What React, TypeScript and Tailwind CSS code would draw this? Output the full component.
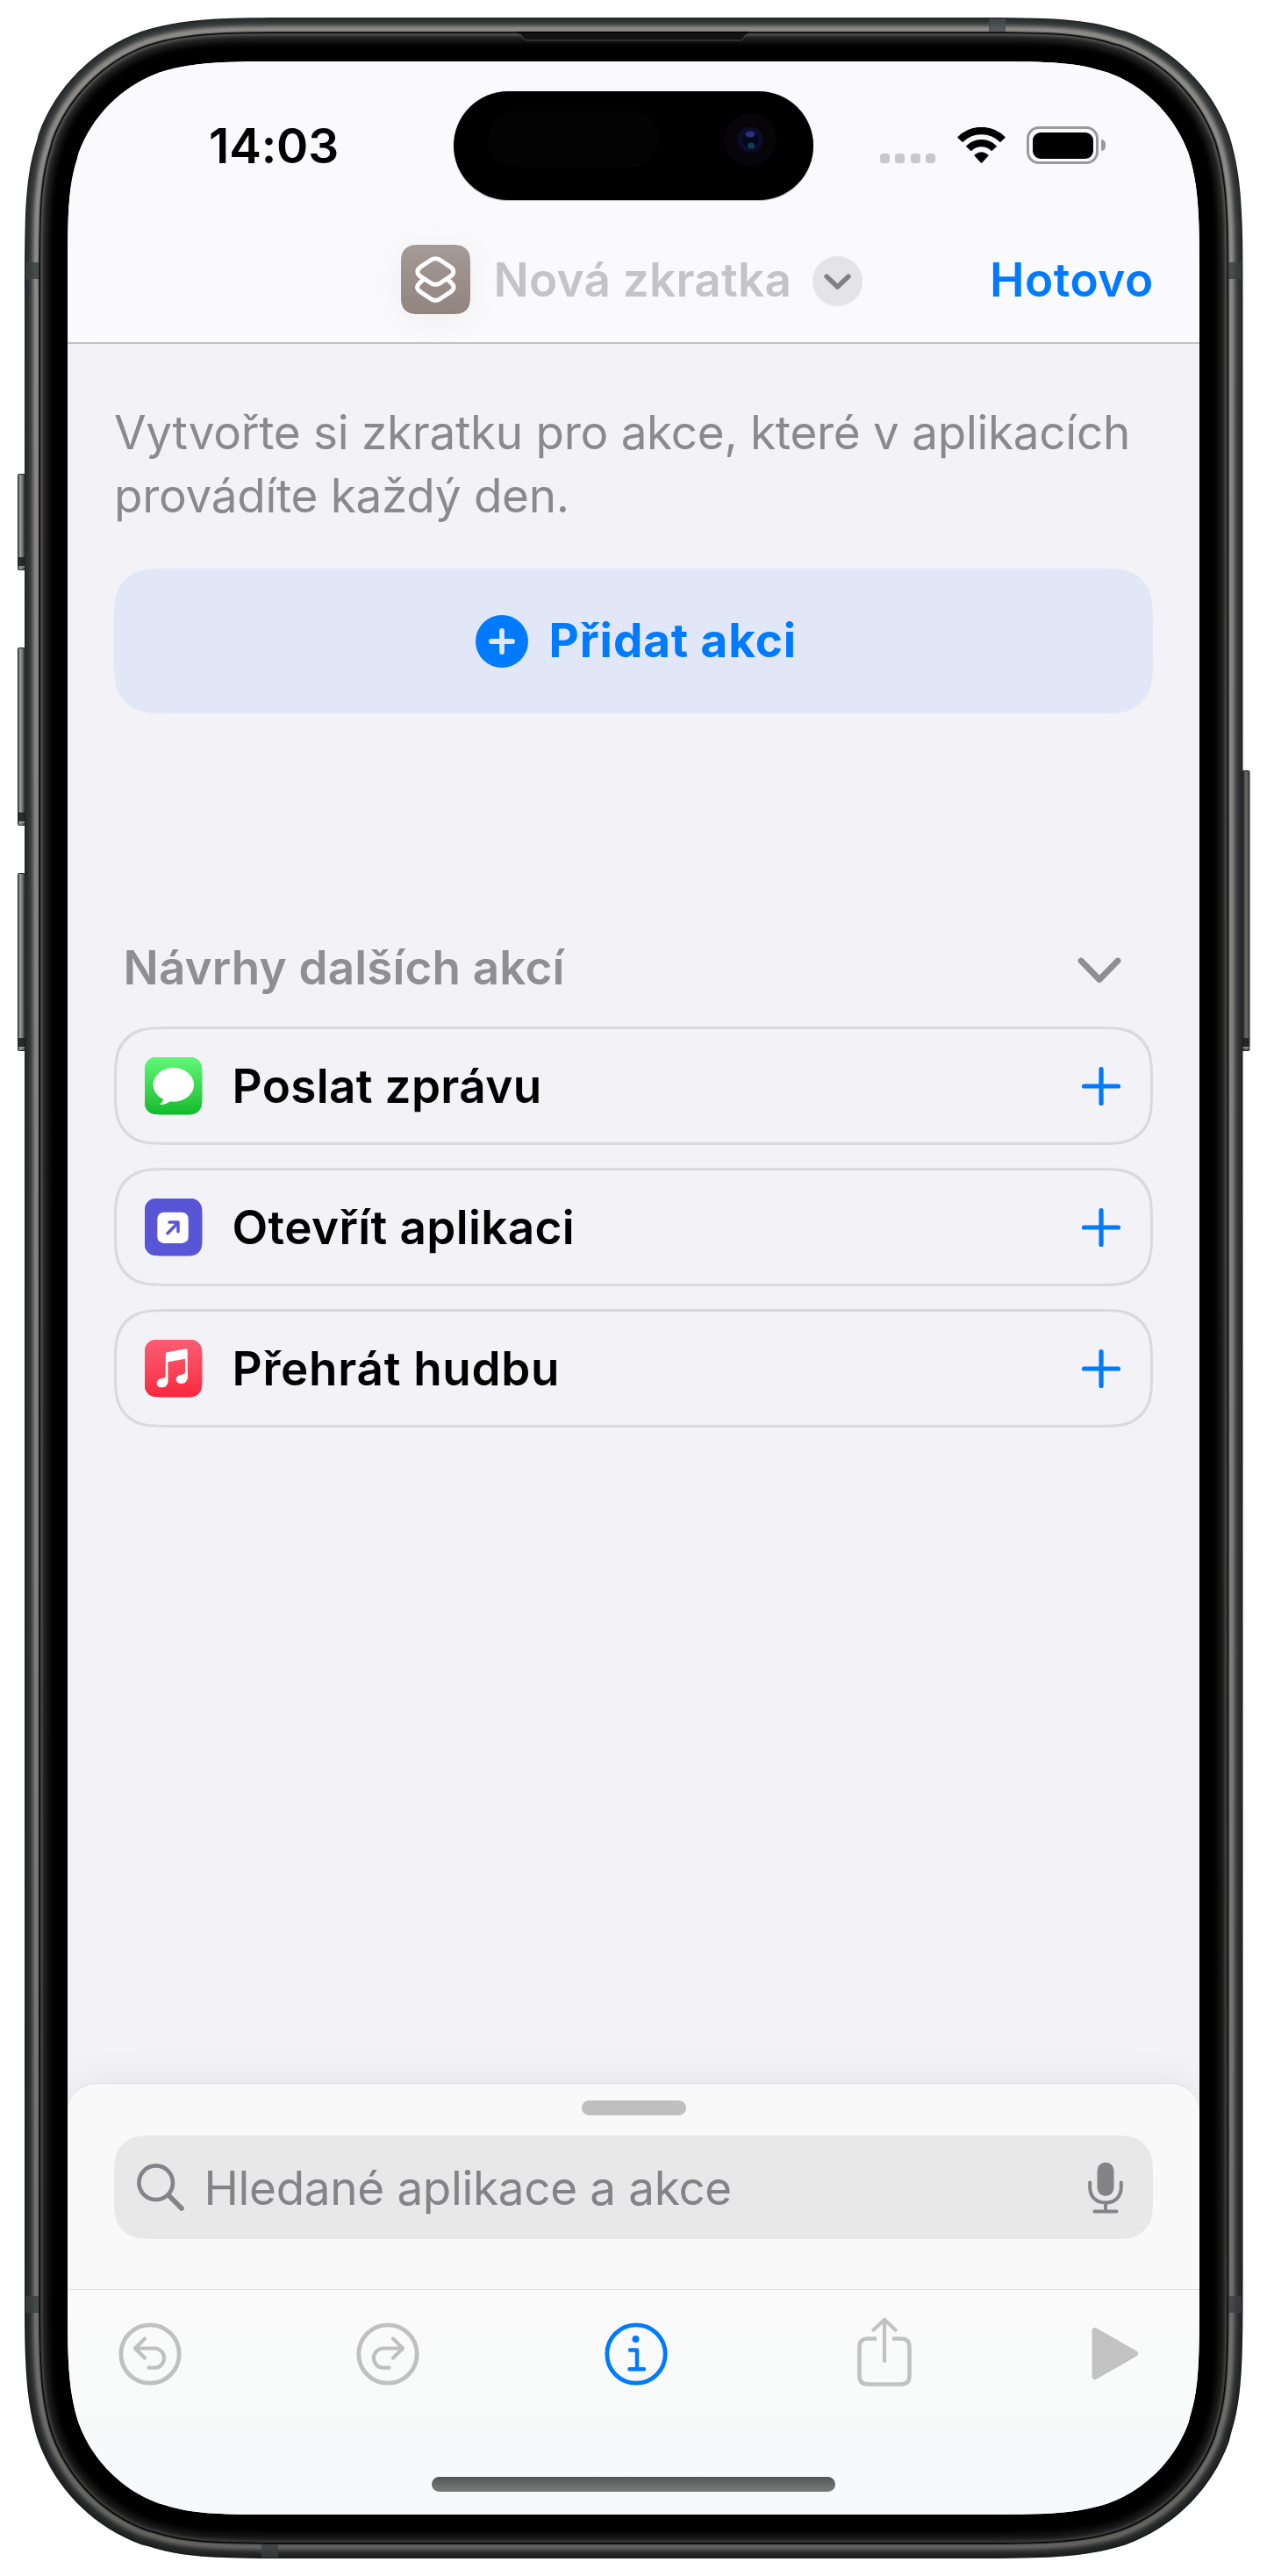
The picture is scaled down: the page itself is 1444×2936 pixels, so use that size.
import type { ReactNode } from "react";

/** Path of a rectangle with continuous ("squircle") corners. */
function squircle(x: number, y: number, w: number, h: number, radius: number): string {
  const r = Math.min(radius, Math.min(w, h) / 2 / 1.52866483);
  const p = (sx: number, sy: number, a: number, b: number) => {
    const px = sx > 0 ? x + a * r : x + w - a * r;
    const py = sy > 0 ? y + b * r : y + h - b * r;
    return `${px.toFixed(2)} ${py.toFixed(2)}`;
  };
  const A = 1.52866483, B = 1.08849296, C = 0.86840694, D = 0.66993427, E = 0.065496;
  const F = 0.63149399, G = 0.07491139, H = 0.37282383, I = 0.16905956;
  return [
    `M${p(1, 1, A, 0)} L${p(-1, 1, A, 0)}`,
    `C${p(-1, 1, B, 0)} ${p(-1, 1, C, 0)} ${p(-1, 1, D, E)} L${p(-1, 1, F, G)}`,
    `C${p(-1, 1, H, I)} ${p(-1, 1, I, H)} ${p(-1, 1, G, F)}`,
    `C${p(-1, 1, 0, C)} ${p(-1, 1, 0, B)} ${p(-1, 1, 0, A)} L${p(-1, -1, 0, A)}`,
    `C${p(-1, -1, 0, B)} ${p(-1, -1, 0, C)} ${p(-1, -1, E, D)} L${p(-1, -1, G, F)}`,
    `C${p(-1, -1, I, H)} ${p(-1, -1, H, I)} ${p(-1, -1, F, G)}`,
    `C${p(-1, -1, C, 0)} ${p(-1, -1, B, 0)} ${p(-1, -1, A, 0)} L${p(1, -1, A, 0)}`,
    `C${p(1, -1, B, 0)} ${p(1, -1, C, 0)} ${p(1, -1, D, E)} L${p(1, -1, F, G)}`,
    `C${p(1, -1, H, I)} ${p(1, -1, I, H)} ${p(1, -1, G, F)}`,
    `C${p(1, -1, 0, C)} ${p(1, -1, 0, B)} ${p(1, -1, 0, A)} L${p(1, 1, 0, A)}`,
    `C${p(1, 1, 0, B)} ${p(1, 1, 0, C)} ${p(1, 1, E, D)} L${p(1, 1, G, F)}`,
    `C${p(1, 1, I, H)} ${p(1, 1, H, I)} ${p(1, 1, F, G)}`,
    `C${p(1, 1, C, 0)} ${p(1, 1, B, 0)} ${p(1, 1, A, 0)} Z`,
  ].join(" ");
}

const clip = (w: number, h: number, r: number) => ({ clipPath: `path("${squircle(0, 0, w, h, r)}")` });

const RINGS: [number, string][] = [
  [0, "#1f2222"], [1, "#2b2e2f"], [3, "#303334"], [5, "#393c3d"], [7, "#474a4a"], [8, "#555655"],
  [9, "#63635f"], [10, "#747370"], [11, "#82817d"], [12, "#8b8a86"], [15, "#7c7b78"], [16, "#2a2b2b"],
  [17, "#050505"], [18, "#4a4a4a"], [20, "#3c3c3c"], [21, "#303030"], [22, "#272727"], [23, "#1f1f1f"],
  [25, "#171717"], [27, "#0f0f0f"], [29, "#080808"], [31, "#030303"], [33, "#000000"],
];

function SideButton({ x, y, h, flip }: { x: number; y: number; h: number; flip?: boolean }) {
  return (
    <g>
      <rect x={x} y={y} width="9" height={h} rx="2" fill="#222524" />
      <rect x={x + 1} y={y + 1} width="7" height={h - 2} fill={flip ? "url(#btnR)" : "url(#btnL)"} />
      <rect x={x + 1} y={y + h - 15} width="7" height="10" fill="#1c1d1c" opacity="0.85" />
      <rect x={x + 1} y={y + h - 5} width="7" height="2" fill="#8a8a84" />
    </g>
  );
}

function Bezel() {
  return (
    <svg className="absolute inset-0" width="1444" height="2936" viewBox="0 0 1444 2936" aria-hidden="true">
      <defs>
        <linearGradient id="btnL" x1="0" x2="1" y1="0" y2="0">
          <stop offset="0" stopColor="#5b5d5e" />
          <stop offset="0.3" stopColor="#a3a29e" />
          <stop offset="1" stopColor="#3c3e3d" />
        </linearGradient>
        <linearGradient id="btnR" x1="1" x2="0" y1="0" y2="0">
          <stop offset="0" stopColor="#4a4843" />
          <stop offset="0.5" stopColor="#6d6b65" />
          <stop offset="1" stopColor="#262827" />
        </linearGradient>
        <linearGradient id="shade" x1="0" x2="0" y1="0" y2="1">
          <stop offset="0" stopColor="#000" stopOpacity="0" />
          <stop offset="0.6" stopColor="#000" stopOpacity="0.08" />
          <stop offset="0.92" stopColor="#000" stopOpacity="0.2" />
          <stop offset="1" stopColor="#000" stopOpacity="0.3" />
        </linearGradient>
      </defs>
      <SideButton x={20} y={540} h={110} />
      <SideButton x={20} y={738} h={203} />
      <SideButton x={20} y={995} h={203} />
      <SideButton x={1415.5} y={878} h={320} flip />
      {RINGS.map(([i, c]) => (
        <path key={i} d={squircle(28 + i, 20 + i, 1388.5 - 2 * i, 2896 - 2 * i, 211 - i * 0.93)} fill={c} />
      ))}
      <path d={squircle(28, 20, 1388.5, 2896, 211)} fill="url(#shade)" />
      <g fill="#3a3e40" opacity="0.8">
        <rect x="29" y="299" width="15" height="19" />
        <rect x="1400" y="299" width="15" height="19" />
        <rect x="29" y="2617" width="15" height="19" />
        <rect x="1400" y="2617" width="15" height="19" />
        <rect x="1127" y="21" width="19" height="15" fill="#4a4c4e" />
        <rect x="298" y="2900" width="19" height="15" />
      </g>
      <path d="M592 38 L597 44 Q598 46 601 46 H843 Q846 46 847 44 L851 38 Z" fill="#131313" stroke="#4a4a4a" strokeWidth="1" />
      <rect x="590" y="36" width="263" height="2.5" fill="#050505" />
    </svg>
  );
}

function Wifi() {
  return (
    <svg width="55" height="41" viewBox="0 0 165 123">
      <g fill="none" stroke="#000" strokeWidth="25">
        <path d="M9 43 A102.6 102.6 0 0 1 156 43" />
        <path d="M38.5 73.5 A60 60 0 0 1 126.5 73.5" />
      </g>
      <path d="M60 99 Q57 96 60 94 Q82.5 75 105 94 Q108 96 105 99 L86 120 Q82.5 124 79 120 Z" />
    </svg>
  );
}

function StatusBar() {
  return (
    <div className="flex h-[180px] items-start">
      <span className="ml-[161px] mt-[63px] w-[279px] text-[55px] font-semibold leading-[66px] tracking-[-0.1px] text-black">14:03</span>
      <div className="mt-[34px] h-[124px] w-[410px] rounded-full bg-black shadow-[0_1px_1px_rgba(0,0,0,0.3)]">
        <svg width="410" height="124" viewBox="0 0 410 124">
          <defs>
            <radialGradient id="lens">
              <stop offset="0" stopColor="#14143c" />
              <stop offset="0.7" stopColor="#0c0f33" />
              <stop offset="1" stopColor="#05060f" />
            </radialGradient>
          </defs>
          <rect x="39" y="22" width="195" height="65" rx="32" fill="#030303" />
          <circle cx="338" cy="55" r="30" fill="#070509" />
          <circle cx="338" cy="55" r="16" fill="url(#lens)" />
          <circle cx="338" cy="55" r="10" fill="#07071c" />
          <ellipse cx="338" cy="49" rx="5.5" ry="3.5" fill="#2b2f7c" />
          <ellipse cx="339" cy="62" rx="4" ry="3.5" fill="#0f3f4c" />
        </svg>
      </div>
      <div className="ml-[76px] mt-[105px] flex gap-[6.4px]">
        {[0, 1, 2, 3].map((i) => (
          <i key={i} className="h-[11px] w-[11px] rounded-[3.5px] bg-[#c8c8ca]" />
        ))}
      </div>
      <div className="ml-[24.5px] mt-[75px]"><Wifi /></div>
      <div className="ml-[24.5px] mt-[74px] flex items-center">
        <div className="h-[43px] w-[82px] rounded-[14px] border-[3px] border-[#9a9a9c] p-[3.5px]">
          <div className="h-full w-full rounded-[9px] bg-black" />
        </div>
        <div className="ml-[3px] h-[13px] w-[5px] rounded-r-full bg-[#9a9a9c]" />
      </div>
    </div>
  );
}

function NavBar() {
  return (
    <div className="flex h-[140px] items-center">
      <div className="mb-[3px] ml-[380px] h-[79px] w-[79px] rounded-[15px] shadow-[0_6px_40px_rgba(0,0,0,0.05)]">
        <div className="h-[79px] w-[79px] bg-linear-to-b from-[#a59a96] to-[#92847f]" style={clip(79, 79, 16)}>
          <svg width="79" height="79" viewBox="0 0 237 237" fill="none" stroke="#fff" strokeWidth="15" strokeLinejoin="round">
            <path d="M104 51 Q118 43 132 51 L171 77 Q188 92 171 107 L132 132 Q118 140 104 132 L65 107 Q48 92 65 77 Z" />
            <path d="M77 118 L64 130 Q47 146 65 160 L104 186 Q118 194 132 186 L171 160 Q189 146 172 130 L159 118" />
          </svg>
        </div>
      </div>
      <span className="mb-[2px] ml-[26.5px] w-[363.5px] whitespace-nowrap text-[53px] font-semibold leading-[72px] tracking-[0.26px] text-[#c4c4c7]">Nová zkratka</span>
      <div className="flex h-[57px] w-[57px] items-center justify-center rounded-full bg-[#e4e4e6]">
        <svg width="31" height="19" viewBox="0 0 31 19" fill="none" stroke="#808085" strokeWidth="5.4" strokeLinecap="round" strokeLinejoin="round">
          <path d="M3 4 L15.5 16 L28 4" />
        </svg>
      </div>
      <span className="mb-[3px] ml-[145px] text-[53px] font-semibold leading-[72px] tracking-[0.5px] text-[#007aff]">Hotovo</span>
    </div>
  );
}

function MessagesIcon() {
  return (
    <div className="h-[66px] w-[66px] bg-linear-to-b from-[#5ff878] to-[#0aba29]" style={clip(66, 66, 14)}>
      <svg width="66" height="66" viewBox="0 0 198 198" fill="#fff">
        <ellipse cx="98.5" cy="94" rx="69.5" ry="58" />
        <path d="M58 132 Q70 147 53 159 Q51 162 57 162 Q78 161 90 147 Z" />
      </svg>
    </div>
  );
}

function OpenAppIcon() {
  return (
    <div className="h-[66px] w-[66px] bg-[#5856d6]" style={clip(66, 66, 14)}>
      <svg width="66" height="66" viewBox="0 0 198 198">
        <rect x="43" y="47" width="106" height="106" rx="22" fill="#fff" />
        <path d="M78 119 L113 83 M84 81 H114 V113" fill="none" stroke="#5856d6" strokeWidth="10.5" strokeLinecap="round" strokeLinejoin="round" />
      </svg>
    </div>
  );
}

function MusicIcon() {
  return (
    <div className="h-[66px] w-[66px] bg-linear-to-b from-[#fb5c74] to-[#fa233b]" style={clip(66, 66, 14)}>
      <svg width="66" height="66" viewBox="0 0 198 198" fill="#fff">
        <path d="M71 50 Q71 44 77 43 L140 31 Q146 30 146 36 V134 H138 V65 L79 76 V148 H71 Z" />
        <path d="M79 140 C79 156 70 163 58 163 C48 163 41 157 41 149 C41 140 47 134 58 132 C68 130 71 130 71 120 H79 Z" />
        <path d="M146 127 C146 143 137 150 125 150 C115 150 107 144 107 136 C107 127 113 121 125 119 C135 117 138 117 138 107 H146 Z" />
      </svg>
    </div>
  );
}

function ActionCard({ icon, label, tracking }: { icon: ReactNode; label: string; tracking: string }) {
  return (
    <div className="h-[135px] w-[1184px] bg-[#dadade] p-[3px]" style={clip(1184, 135, 44)}>
      <div className="flex h-[129px] w-[1178px] items-center bg-[#f2f2f7] pl-[31.5px] pr-[30.5px]" style={clip(1178, 129, 42)}>
        {icon}
        <span className={`ml-[34px] mt-px whitespace-nowrap text-[53px] font-semibold leading-[72px] text-black ${tracking}`}>{label}</span>
        <svg className="ml-auto" width="52" height="52" viewBox="0 0 52 52" stroke="#007aff" strokeWidth="5.2" strokeLinecap="round">
          <path d="M26 6.5 V45.5 M6.5 26 H45.5" />
        </svg>
      </div>
    </div>
  );
}

function Content() {
  return (
    <div className="flex-1 px-[53px] pt-[65px]">
      <p className="whitespace-nowrap text-[53px] leading-[72px] tracking-[-0.27px] text-[#8a8a8e]">
        Vytvořte si zkratku pro akce, které v aplikacích
        <br />
        provádíte každý den.
      </p>
      <div className="mt-[47px] flex h-[165px] w-[1184px] items-center bg-[#e1e7f6] pl-[412px]" style={clip(1184, 165, 44)}>
        <svg width="60" height="60" viewBox="0 0 60 60">
          <circle cx="30" cy="30" r="30" fill="#007aff" />
          <path d="M30 18 V42 M18 30 H42" stroke="#e1e7f6" strokeWidth="5.8" strokeLinecap="round" />
        </svg>
        <span className="mb-px ml-[23.5px] whitespace-nowrap text-[53px] font-bold leading-[72px] tracking-[0.9px] text-[#007aff]">Přidat akci</span>
      </div>
      <div className="mt-[254px] flex items-center justify-between pl-[10.5px] pr-[36px]">
        <h2 className="whitespace-nowrap text-[53px] font-semibold leading-[72px] tracking-[0.15px] text-[#8e8e93]">Návrhy dalších akcí</h2>
        <svg className="mt-[5px]" width="50" height="30" viewBox="0 0 50 30" fill="none" stroke="#8e8e93" strokeWidth="6.8" strokeLinecap="round" strokeLinejoin="round">
          <path d="M4 4 L25 25.5 L46 4" />
        </svg>
      </div>
      <div className="mt-[31px] flex flex-col gap-[26px]">
        <ActionCard icon={<MessagesIcon />} label="Poslat zprávu" tracking="tracking-[0.36px]" />
        <ActionCard icon={<OpenAppIcon />} label="Otevřít aplikaci" tracking="tracking-[0.38px]" />
        <ActionCard icon={<MusicIcon />} label="Přehrát hudbu" tracking="tracking-[0.72px]" />
      </div>
    </div>
  );
}

function SearchSheet() {
  return (
    <div className="h-[235px] rounded-t-[33px] border-t-[1.5px] border-[#dcdce0] bg-[#f9f9f9] px-[53px] pt-[19px] shadow-[0_0_44px_rgba(0,0,0,0.07)]">
      <div className="mx-auto h-[17px] w-[119px] rounded-full bg-[#bfbfc0]" />
      <div className="mt-[23px] flex h-[118px] w-[1184px] items-center bg-[#e8e8e8] pl-[26px] pr-[34px]" style={clip(1184, 118, 34)}>
        <svg width="54" height="54" viewBox="0 0 54 54" fill="none" stroke="#838388" strokeLinecap="round">
          <circle cx="21.7" cy="21.7" r="19.3" strokeWidth="4.6" />
          <path d="M36 36 L51 51" strokeWidth="5.6" />
        </svg>
        <span className="ml-[22.5px] mt-[2px] whitespace-nowrap text-[53px] leading-[72px] tracking-[-0.32px] text-[#838388]">Hledané aplikace a akce</span>
        <svg className="ml-auto" width="40" height="59" viewBox="0 0 40 59" fill="none" stroke="#838388" strokeWidth="4" strokeLinecap="round">
          <rect x="10.5" y="0.5" width="19" height="38.5" rx="9.5" fill="#838388" stroke="none" />
          <path d="M2.2 23.5 V29 C2.2 40 9.5 46.5 20 46.5 C30.5 46.5 37.8 40 37.8 29 V23.5 M20 46.5 V56 M7.5 56.5 H32.5" />
        </svg>
      </div>
    </div>
  );
}

function UndoGlyph({ flip }: { flip?: boolean }) {
  return (
    <svg className={flip ? "-scale-x-100" : ""} width="72" height="72" viewBox="0 0 72 72" fill="none" stroke="#c0c0c0" strokeWidth="4.8" strokeLinecap="round" strokeLinejoin="round">
      <circle cx="36" cy="36" r="33.2" />
      <path d="M30 18.5 L19 29.5 L30 40.5 M20 29.5 H41 A11.1 11.1 0 0 1 41 51.7 H34.5" strokeWidth="4.2" />
    </svg>
  );
}

function Toolbar() {
  return (
    <div className="h-[257px] border-t-[1.5px] border-[#dedede] bg-linear-to-b from-[#fafafa] via-[#f9fafa] to-[#f6fafb]">
      <div className="flex h-[145px] items-center pl-[58px]">
        <UndoGlyph />
        <div className="ml-[198.5px]"><UndoGlyph flip /></div>
        <svg className="ml-[211px]" width="72" height="72" viewBox="0 0 72 72" fill="none" stroke="#007aff" strokeWidth="4.4" strokeLinecap="round" strokeLinejoin="round">
          <circle cx="36" cy="36" r="33.2" strokeWidth="4.8" />
          <circle cx="35.5" cy="19" r="4" fill="#007aff" stroke="none" />
          <path d="M29 31.5 H37 V53 M28.5 53.3 H45" />
        </svg>
        <svg className="mb-[5px] ml-[216.5px]" width="62" height="79" viewBox="0 0 62 79" fill="none" stroke="#c2c2c2" strokeWidth="4.6" strokeLinecap="round" strokeLinejoin="round">
          <path d="M31 3 V50 M18.5 14.5 L31 2.8 L43.5 14.5" strokeWidth="4.2" />
          <path d="M22 24.5 H12 Q2.5 24.5 2.5 34 V67 Q2.5 76.5 12 76.5 H50 Q59.5 76.5 59.5 67 V34 Q59.5 24.5 50 24.5 H40" strokeLinecap="butt" />
        </svg>
        <svg className="ml-[204.5px]" width="54" height="61" viewBox="0 0 54 61" fill="#c2c2c2" stroke="#c2c2c2" strokeWidth="7" strokeLinejoin="round">
          <path d="M4 4.5 L49.5 30.5 L4 56.5 Z" />
        </svg>
      </div>
      <div className="mx-auto mt-[68px] h-[17px] w-[460px] rounded-full bg-linear-to-b from-[#555756] to-[#7b7c7c]" />
    </div>
  );
}

export default function App() {
  return (
    <main className="relative h-[2936px] w-[1444px] overflow-hidden bg-white pl-[77px] pt-[70px] [font-family:Inter,'Liberation_Sans',sans-serif]">
      <Bezel />
      <div className="relative flex h-[2796px] w-[1290px] flex-col bg-[#f2f2f7]" style={clip(1290, 2796, 166)}>
        <header className="h-[322px] border-b-2 border-[#c2c2c6] bg-[#fafafc]">
          <StatusBar />
          <NavBar />
        </header>
        <Content />
        <SearchSheet />
        <Toolbar />
      </div>
    </main>
  );
}
